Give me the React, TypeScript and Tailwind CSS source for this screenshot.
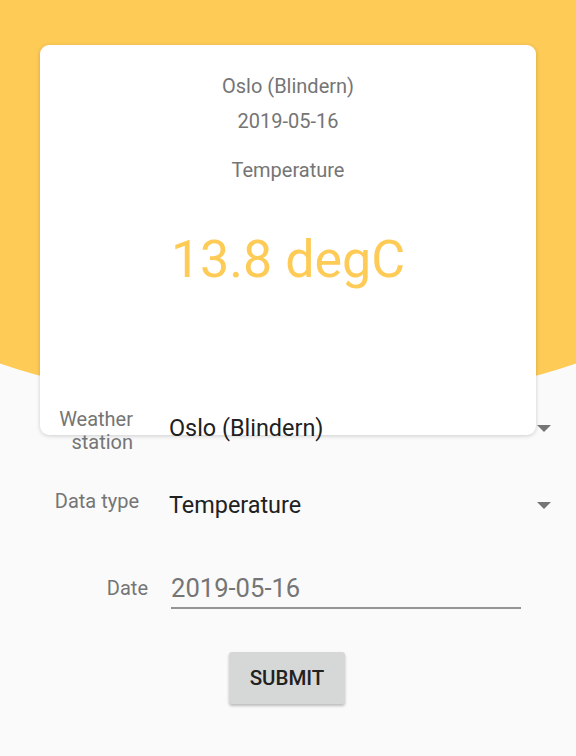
import React from "react";

function Arrow() {
  return (
    <svg width="14" height="7" viewBox="0 0 14 7" className="block">
      <path d="M0 0 L14 0 L7 7 Z" fill="#757575" />
    </svg>
  );
}

export default function App() {
  return (
    <div className="relative w-[576px] min-h-[756px] overflow-hidden bg-[#fafafa] font-['Roboto',sans-serif]">
      <div className="absolute left-[-72px] top-0 h-[402px] w-[720px] bg-[#fecb57] rounded-bl-[360px_96px] rounded-br-[360px_96px]" />

      <div className="relative pt-[45px] pl-[40px]">
        <div className="flex h-[390px] w-[496px] flex-col items-center rounded-[9px] bg-white shadow-[0_1px_4px_rgba(0,0,0,0.18)]">
          <div className="mt-[29px] text-[20px] leading-[24px] text-[#757575]">Oslo (Blindern)</div>
          <div className="mt-[11px] text-[20px] leading-[24px] text-[#757575]">2019-05-16</div>
          <div className="mt-[25px] text-[20px] leading-[24px] text-[#757575]">Temperature</div>
          <div className="mt-[48px] text-[52px] leading-[60px] text-[#fecb57]">13.8 degC</div>
        </div>
      </div>

      <div className="relative -mt-[27px]">
        {/* Row 1 */}
        <div className="flex items-start">
          <div className="w-[133px] text-right text-[20px] leading-[23px] text-[#757575]">
            Weather
            <br />
            station
          </div>
          <div className="ml-[36px] mt-[8px] flex w-[382px] items-center justify-between">
            <span className="text-[23.4px] leading-[24px] text-[#212121]">Oslo (Blindern)</span>
            <Arrow />
          </div>
        </div>
        {/* Row 2 */}
        <div className="mt-[35px] flex items-start">
          <div className="w-[139px] text-right text-[20px] leading-[24px] text-[#757575]">Data type</div>
          <div className="ml-[30px] mt-[4px] flex w-[382px] items-center justify-between">
            <span className="text-[23.4px] leading-[24px] text-[#212121]">Temperature</span>
            <Arrow />
          </div>
        </div>
        {/* Row 3 */}
        <div className="mt-[59px] flex items-start">
          <div className="w-[148px] text-right text-[20px] leading-[24px] text-[#757575]">Date</div>
          <div className="ml-[23px] -mt-[2px] w-[350px] border-b-2 border-[#949494] pb-[3px]">
            <span className="text-[25.6px] leading-[28px] text-[#757575]">2019-05-16</span>
          </div>
        </div>
        {/* Submit */}
        <div className="mt-[43px] flex">
          <button className="ml-[229px] h-[52px] w-[116px] rounded-[3px] bg-[#d6d7d7] text-[20.5px] font-medium text-[#212121] shadow-[0_2px_3px_rgba(0,0,0,0.25)]">
            SUBMIT
          </button>
        </div>
      </div>
    </div>
  );
}
